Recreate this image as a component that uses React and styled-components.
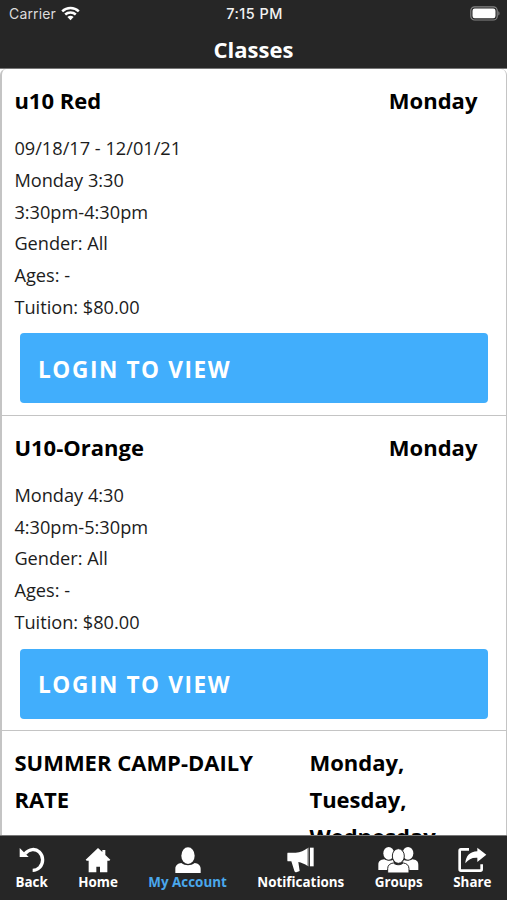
import React from "react";
import styled, { createGlobalStyle } from "styled-components";

const GlobalStyle = createGlobalStyle`
  * {
    box-sizing: border-box;
  }
  body {
    margin: 0;
    background: #fff;
    font-family: "Open Sans", "Noto Sans", sans-serif;
  }
`;

// layout
const Screen = styled.div`
  display: flex;
  flex-direction: column;
  height: 900px;
  width: 507px;
  overflow: hidden;
`;
const Header = styled.header`
  flex: none;
  height: 69px;
  background: #262626;
  color: #fff;
  border-bottom: 1px solid #777;
`;
const StatusBar = styled.div`
  display: grid;
  grid-template-columns: 1fr auto 1fr;
  align-items: center;
  height: 27px;
  padding: 0 7px 0 9px;
  font-family: Inter, "Liberation Sans", sans-serif;
  font-size: 14px;
  line-height: 27px;
`;
const Carrier = styled.div`
  display: flex;
  align-items: center;
  gap: 5px;
  color: #dcdcdc;
  letter-spacing: 0.15px;
`;
const Clock = styled.div`
  font-weight: 500;
  font-size: 14.4px;
  letter-spacing: 0.5px;
  color: #f2f2f2;
`;
const BatteryIcon = styled.svg`
  justify-self: end;
`;
const Title = styled.h1`
  margin: 0;
  font-size: 22px;
  line-height: 44px;
  font-weight: 700;
  text-align: center;
`;

// class list
const List = styled.main`
  flex: 1;
  min-height: 0;
  overflow: hidden;
  border: solid #c4c4c4;
  border-width: 0 1px 0 2px;
  border-radius: 6px 6px 0 0;
`;
const Card = styled.section`
  padding: 13px 18.6px 11.5px 12.4px;
  border-bottom: 1px solid #c4c4c4;
`;
const CardHead = styled.div`
  display: flex;
  justify-content: space-between;
  margin-bottom: 14.25px;
  font-size: 22px;
  line-height: 36.75px;
  font-weight: 700;
  color: #000;
`;
const Name = styled.div`
  max-width: 260px;
`;
const Days = styled.div`
  max-width: ${(props) => (props.$wide ? "178px" : "none")};
  width: ${(props) => (props.$wide ? "178px" : "auto")};
  padding-right: ${(props) => (props.$wide ? "0" : "10px")};
`;
const Detail = styled.div`
  font-size: 18.2px;
  line-height: 31.75px;
  color: #1c1c1c;
`;
const LoginButton = styled.button`
  display: block;
  width: 468px;
  height: 70px;
  margin: 9.9px 0 0 5.6px;
  padding: 2px 18px 0;
  border: 0;
  border-radius: 4px;
  background: #41aefc;
  color: #fff;
  font-family: inherit;
  font-size: 22.6px;
  font-weight: 700;
  letter-spacing: 1.6px;
  text-align: left;
`;

// bottom tabs
const TabBar = styled.nav`
  flex: none;
  display: flex;
  justify-content: space-between;
  height: 65px;
  padding: 11px 15.5px 0;
  background: #262626;
  border-top: 1px solid #777;
`;
const Tab = styled.div`
  display: flex;
  flex-direction: column;
  align-items: center;
  color: ${(props) => (props.$active ? "#4aa8ec" : "#fff")};
  font-size: 13.4px;
  line-height: 18px;
  font-weight: 700;
  white-space: nowrap;
  svg {
    display: block;
    height: 26px;
    color: #fff;
  }
`;

const Wifi = () => (
  <svg width="19" height="15" viewBox="0 0 19 15" fill="none" stroke="#fff" strokeWidth="2.5">
    <path d="M1.2 5.3a12 12 0 0 1 16.6 0" />
    <path d="M4.2 8.5a7.8 7.8 0 0 1 10.6 0" />
    <path d="M9.5 14.2 6.4 11.1a4.5 4.5 0 0 1 6.2 0z" fill="#fff" stroke="none" />
  </svg>
);

const Battery = () => (
  <BatteryIcon width="30" height="15" viewBox="0 0 30 15">
    <rect x="0.8" y="0.8" width="26.4" height="13.2" rx="3.8" fill="none" stroke="#858585" strokeWidth="1.2" />
    <rect x="2.5" y="2.5" width="23" height="9.8" rx="2.2" fill="#fff" />
    <path d="M28.3 5.2c1.6.6 1.6 3.8 0 4.4z" fill="#858585" />
  </BatteryIcon>
);

const BackIcon = () => (
  <svg viewBox="0 0 78 78">
    <path
      d="M18 20C31 5 49 4 61 15c13 13 13 33 1 46-6 6-13 9-21 9"
      fill="none"
      stroke="currentColor"
      strokeWidth="10"
    />
    <path d="M2 3v27h27z" fill="currentColor" />
  </svg>
);

const HomeIcon = () => (
  <svg viewBox="0 0 78 78" fill="currentColor">
    <path d="M39 3 52 15V9h9v15l15 14-3 3h-6v35H45V59H34v17H11V41H5l-3-3z" />
  </svg>
);

const UserIcon = () => (
  <svg viewBox="0 0 78 78" fill="currentColor">
    <ellipse cx="39" cy="26" rx="20" ry="25" />
    <path d="M1 78V65c0-10 8-16 18-17 12 9 28 9 40 0 10 1 18 7 18 17v13z" />
  </svg>
);

const MegaphoneIcon = () => (
  <svg viewBox="0 0 82 78" fill="currentColor">
    <path d="M3 17h23c14-1 26-6 36-14v54c-9-7-19-10-28-12l4 27-10 4c-3 0-5-2-6-5l-9-28H3c-2 0-2-3-2-5V22c0-3 0-5 2-5z" />
    <path d="M65 2v56" stroke="#888" strokeWidth="3" />
    <path d="M69 2h11v56H69z" />
  </svg>
);

const GroupsIcon = () => (
  <svg viewBox="0 0 122 78" fill="currentColor">
    <ellipse cx="32" cy="19" rx="16" ry="19" />
    <ellipse cx="90" cy="19" rx="16" ry="19" />
    <path d="M1 69V53c0-11 8-15 18-16 8 5 17 6 26 2l9 30zM121 69V53c0-11-8-15-18-16-8 5-17 6-26 2l-9 30z" />
    <path
      d="M29 78V65c0-11 8-16 17-17 9 7 21 7 30 0 9 1 17 6 17 17v13z"
      stroke="#262626"
      strokeWidth="3"
    />
    <ellipse cx="61" cy="27" rx="18" ry="22" stroke="#262626" strokeWidth="3" />
  </svg>
);

const ShareIcon = () => (
  <svg viewBox="0 0 86 78">
    <path
      d="M33 7H9c-3 0-4 1-4 4v56c0 3 1 4 4 4h58c3 0 4-1 4-4V52"
      fill="none"
      stroke="currentColor"
      strokeWidth="8"
    />
    <path d="M58 2 85 23 58 45V32C42 31 31 37 22 49c1-21 14-36 36-36z" fill="currentColor" />
  </svg>
);

const classes = [
  {
    name: "u10 Red",
    days: ["Monday"],
    details: [
      "09/18/17 - 12/01/21",
      "Monday 3:30",
      "3:30pm-4:30pm",
      "Gender: All",
      "Ages: -",
      "Tuition: $80.00",
    ],
  },
  {
    name: "U10-Orange",
    days: ["Monday"],
    details: ["Monday 4:30", "4:30pm-5:30pm", "Gender: All", "Ages: -", "Tuition: $80.00"],
  },
  {
    name: "SUMMER CAMP-DAILY RATE",
    days: ["Monday,", "Tuesday,", "Wednesday,"],
    details: [],
  },
];

const tabs = [
  { label: "Back", Icon: BackIcon },
  { label: "Home", Icon: HomeIcon },
  { label: "My Account", Icon: UserIcon, active: true },
  { label: "Notifications", Icon: MegaphoneIcon },
  { label: "Groups", Icon: GroupsIcon },
  { label: "Share", Icon: ShareIcon },
];

export default function App() {
  return (
    <>
      <GlobalStyle />
      <Screen>
        <Header>
          <StatusBar>
            <Carrier>
              Carrier
              <Wifi />
            </Carrier>
            <Clock>7:15 PM</Clock>
            <Battery />
          </StatusBar>
          <Title>Classes</Title>
        </Header>
        <List>
          {classes.map((item) => (
            <Card key={item.name}>
              <CardHead>
                <Name>{item.name}</Name>
                <Days $wide={item.days.length > 1}>
                  {item.days.map((day) => (
                    <div key={day}>{day}</div>
                  ))}
                </Days>
              </CardHead>
              {item.details.map((line) => (
                <Detail key={line}>{line}</Detail>
              ))}
              {item.details.length > 0 && <LoginButton>LOGIN TO VIEW</LoginButton>}
            </Card>
          ))}
        </List>
        <TabBar>
          {tabs.map(({ label, Icon, active }) => (
            <Tab key={label} $active={active}>
              <Icon />
              {label}
            </Tab>
          ))}
        </TabBar>
      </Screen>
    </>
  );
}
